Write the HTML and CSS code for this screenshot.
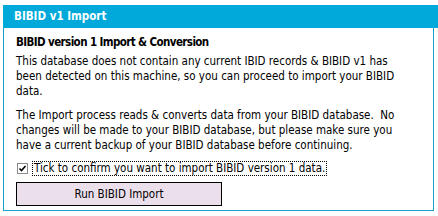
FILE: index.html
```html
<!DOCTYPE html>
<html>
<head>
<meta charset="utf-8">
<link rel="stylesheet" href="styles.css">
</head>
<body>
<div class="frame">
  <div class="header">BIBID v1 Import</div>
  <div class="panel">
    <div class="title">BIBID version 1 Import &amp; Conversion</div>
    <p class="para">This database does not contain any current IBID records &amp; BIBID v1 has<br>been detected on this machine, so you can proceed to import your BIBID<br>data.</p>
    <p class="para">The Import process reads &amp; converts data from your BIBID database.&nbsp; No<br>changes will be made to your BIBID database, but please make sure you<br>have a current backup of your BIBID database before continuing.</p>
    <div class="check-row">
      <span class="box"><svg width="9" height="9" viewBox="0 0 9 9"><path d="M1.5 4.5 L3.5 6.5 L7.5 2" fill="none" stroke="#000" stroke-width="1.6"/></svg></span>
      <span class="label">Tick to confirm you want to import BIBID version 1 data.</span>
    </div>
    <div class="button">Run BIBID Import</div>
  </div>
</div>
</body>
</html>
```
FILE: styles.css
```css
html, body {
  margin: 0;
  padding: 0;
  background: #ffffff;
}
body {
  font-family: "DejaVu Sans Condensed", "DejaVu Sans", sans-serif;
  font-stretch: condensed;
  font-size: 11.5px;
  color: #000;
}
.frame {
  margin: 5px 0 0 3px;
  width: 435px;
}
.header {
  background: #00a9d9;
  color: #fff;
  font-weight: bold;
  height: 23px;
  line-height: 23px;
  padding-left: 11px;
}
.panel {
  width: 431px;
  border: 1px solid #1aa0cf;
  border-top: none;
  padding: 6px 0 7px 12px;
  box-sizing: border-box;
  height: 183px;
}
.title {
  font-weight: bold;
  line-height: 16px;
  letter-spacing: -0.6px;
}
.para {
  margin: 4px 0 9px 0;
  line-height: 15px;
  white-space: nowrap;
}
.check-row {
  display: flex;
  align-items: center;
  gap: 4px;
  margin-top: -2px;
  height: 17px;
}
.box {
  width: 9px;
  height: 9px;
  border: 1px solid #8a8a8a;
  display: flex;
  margin-left: 1px;
}
.label {
  border: 1px dotted #000;
  padding: 0 1px;
  line-height: 13px;
}
.button {
  margin-top: 5px;
  width: 206px;
  height: 24px;
  box-sizing: border-box;
  border: 1px solid #000;
  background: #ecdfec;
  text-align: center;
  line-height: 22px;
}
```
